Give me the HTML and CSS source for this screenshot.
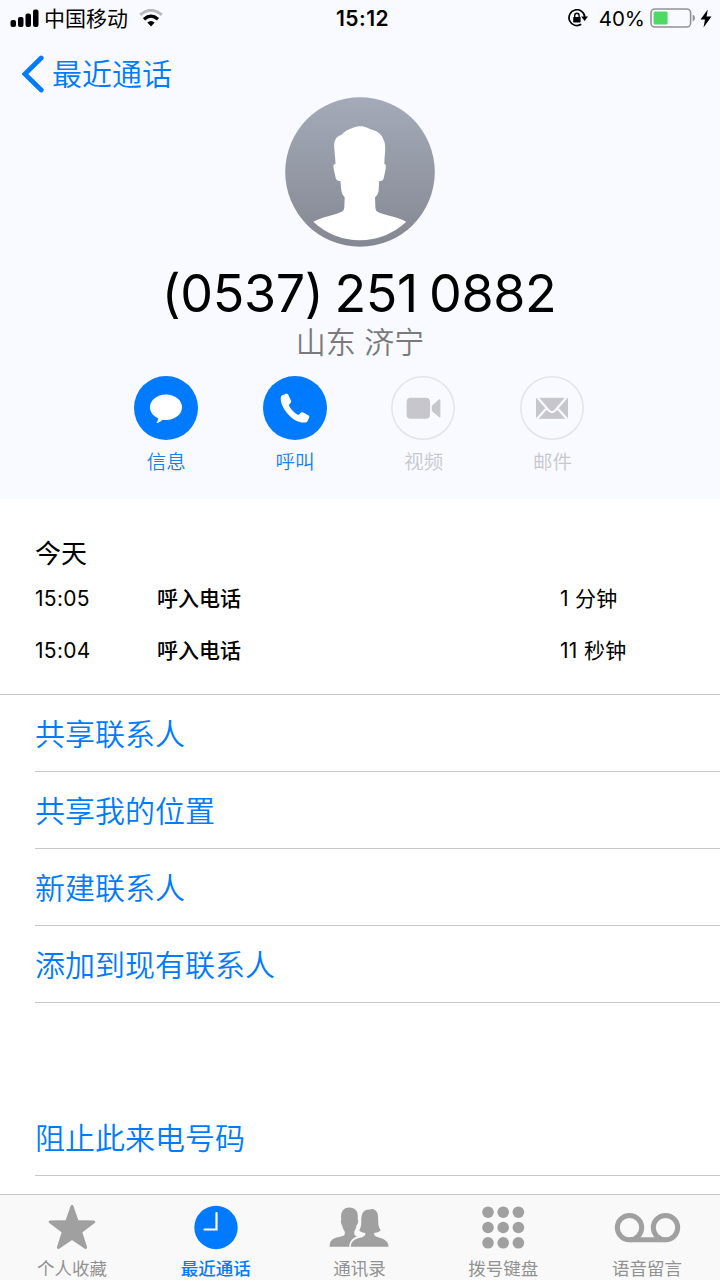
FILE: index.html
```html
<!DOCTYPE html>
<html lang="zh-CN">
<head>
    <meta charset="UTF-8">
    <meta name="viewport" content="width=device-width, initial-scale=1.0">
    <title>最近通话</title>
    <link rel="stylesheet" href="styles.css">
</head>
<body>
<div class="phone">
    <header class="header">
        <div class="status">
            <div class="status-left">
                <svg class="signal" width="29" height="18" viewBox="0 0 29 18">
                    <rect x="0.5" y="11" width="5.5" height="7" rx="2"/>
                    <rect x="8" y="8" width="5.5" height="10" rx="2"/>
                    <rect x="15.5" y="4.5" width="5.5" height="13.5" rx="2"/>
                    <rect x="23" y="0.5" width="5.5" height="17.5" rx="2"/>
                </svg>
                <span class="carrier">中国移动</span>
                <svg class="wifi" width="24" height="18" viewBox="0 0 24 18">
                    <path d="M1.2 5.9Q12-3.3 22.8 5.9" fill="none" stroke="#b8b8bc" stroke-width="3"/>
                    <path d="M5 10.2Q12 4.2 19 10.2" fill="none" stroke="#000" stroke-width="3.2"/>
                    <path d="M8.3 13.6Q12 10.6 15.7 13.6L12 17.6z"/>
                </svg>
            </div>
            <span class="clock">15:12</span>
            <div class="status-right">
                <svg class="lock" width="20" height="18" viewBox="0 0 20 18">
                    <path d="M13.2 15.3A7.9 7.9 0 1 1 16.8 8.2" fill="none" stroke="#000" stroke-width="1.7"/>
                    <path d="M13.2 7.5H20L16.6 12z"/>
                    <rect x="5.2" y="8" width="7.4" height="5.4" rx="0.6"/>
                    <path d="M6.7 8V6.4a2.2 2.2 0 0 1 4.4 0V8" fill="none" stroke="#000" stroke-width="1.4"/>
                </svg>
                <span class="percent">40%</span>
                <svg class="battery" width="46" height="20" viewBox="0 0 46 20">
                    <rect x="1" y="1" width="39.6" height="18" rx="4" fill="none" stroke="#919196" stroke-width="1.6"/>
                    <path d="M42.7 6.5c3 1.5 3 5.5 0 7z" fill="#919196"/>
                    <rect x="3.6" y="3.6" width="14" height="12.8" rx="1.5" fill="#4cd964"/>
                </svg>
                <svg class="bolt" width="12" height="19" viewBox="0 0 12 19">
                    <path d="M7.8 0.5L0.5 10.4H5L3.5 18.5L11.5 7.6H6.6z"/>
                </svg>
            </div>
        </div>

        <div class="nav">
            <svg width="22" height="38" viewBox="0 0 22 38">
                <path d="M19.2 3L2.8 19L19.2 35" fill="none" stroke="#007aff" stroke-width="4.8" stroke-linecap="round" stroke-linejoin="miter"/>
            </svg>
            <span>最近通话</span>
        </div>

        <svg class="avatar" width="150" height="150" viewBox="0 0 150 150">
            <defs>
                <linearGradient id="avatarBg" x1="0" y1="0" x2="0" y2="1">
                    <stop offset="0" stop-color="#a4aab9"/>
                    <stop offset="1" stop-color="#858892"/>
                </linearGradient>
            </defs>
            <circle cx="75" cy="75" r="74.8" fill="url(#avatarBg)"/>
            <path fill="#fff" d="M75 29.3C81 29.3 84 32 89 33.5C95 35 100.2 42 100.2 50C100.2 57 99.4 61 99.3 67C101 66.8 101 68.5 100.6 72L98.8 81C98.3 83.5 96.5 84 94.2 84L93.6 94C93.3 97 91.5 99 90 100.3L90.3 109C90.4 112.5 91 114 93 115C100 118.5 112 119.5 121.3 124.8A68 68 0 0 1 28.3 124.8C38 119.5 49 118.5 56 115C58.5 114 59.3 112.5 59.4 109L59.7 100.3C57.5 98 56.5 96 56.2 92L55.4 84C53 84.3 51.3 83.3 50.7 81L48.7 72C48 68.5 48.5 66.5 50.6 67L49.2 50C48.8 44 51 40.5 54 39C58 37.5 58.5 35 63 32.8C67.5 31 71 29.3 75 29.3z"/>
        </svg>
        <h1 class="number">(0537) 251 0882</h1>
        <div class="place">山东 济宁</div>

        <div class="actions">
            <div class="action">
                <svg width="64" height="64" viewBox="0 0 64 64">
                    <circle cx="32" cy="32" r="32" fill="#007aff"/>
                    <path fill="#fff" d="M32 18.6C41 18.6 48 24.2 48 31.3S41 44 32 44C30.8 44 29.6 43.9 28.5 43.7C26.8 45.7 24.7 46.9 22.2 47.1C23.4 45.8 24.1 44.3 24 42.3C19.2 40.2 16 36.1 16 31.3C16 24.2 23 18.6 32 18.6z"/>
                </svg>
                <span>信息</span>
            </div>
            <div class="action">
                <svg width="64" height="64" viewBox="0 0 64 64">
                    <circle cx="32" cy="32" r="32" fill="#007aff"/>
                    <path fill="#fff" d="M19.3 19.3L22.4 17.9C23.7 17.3 24.8 17.7 25.4 19L28 24.8C28.5 26 28 26.9 26.9 27.7C25.9 28.4 25.8 29.4 26.5 30.6C28.5 34 31 36.7 34.4 38.5C35.4 39 36.2 38.8 36.9 37.8C37.7 36.5 38.9 36 40.2 36.6L45.2 39.2C46.4 39.9 46.6 40.8 46 42.1L44.6 44.9C44.2 45.8 43.4 46.3 42.4 46.5C36.5 47.3 29.5 43.5 24.8 38C20 32.5 17.2 26 17.8 21.6C18 20.5 18.4 19.8 19.3 19.3z"/>
                </svg>
                <span>呼叫</span>
            </div>
            <div class="action disabled">
                <svg width="64" height="64" viewBox="0 0 64 64">
                    <circle cx="32" cy="32" r="31.2" fill="none" stroke="#e5e4eb" stroke-width="1.6"/>
                    <rect x="15.6" y="21.8" width="23.4" height="21" rx="4" fill="#c7c6cd"/>
                    <path d="M40.8 29.7L48.2 23.3Q49.4 22.8 49.4 24.2V40.4Q49.4 41.8 48.2 41.3L40.8 35.1z" fill="#c7c6cd"/>
                </svg>
                <span>视频</span>
            </div>
            <div class="action disabled">
                <svg width="64" height="64" viewBox="0 0 64 64">
                    <circle cx="32" cy="32" r="31.2" fill="none" stroke="#e5e4eb" stroke-width="1.6"/>
                    <rect x="16" y="21.8" width="32" height="21" fill="#c7c6cd"/>
                    <path d="M16 19.8L28.8 34.5Q32 37.8 35.2 34.5L48 19.8M16 44L26.6 32.2M48 44L37.4 32.2" fill="none" stroke="#f9faff" stroke-width="2.2"/>
                </svg>
                <span>邮件</span>
            </div>
        </div>
    </header>

    <section class="history">
        <h2>今天</h2>
        <div class="call">
            <span>15:05</span>
            <span class="kind">呼入电话</span>
            <span>1 分钟</span>
        </div>
        <div class="call">
            <span>15:04</span>
            <span class="kind">呼入电话</span>
            <span>11 秒钟</span>
        </div>
    </section>

    <ul class="links">
        <li>共享联系人</li>
        <li>共享我的位置</li>
        <li>新建联系人</li>
        <li>添加到现有联系人</li>
        <li class="block">阻止此来电号码</li>
    </ul>

    <nav class="tabs">
        <div class="tab">
            <svg width="60" height="48" viewBox="0 0 60 48">
                <path d="M30 4.5L35.2 19.4L51.8 19.9L38.6 29.8L43.6 45.4L30 36.3L16.4 45.4L21.4 29.8L8.2 19.9L24.8 19.4z" fill="#a0a0a0" stroke="#a0a0a0" stroke-width="3" stroke-linejoin="round"/>
            </svg>
            <span>个人收藏</span>
        </div>
        <div class="tab active">
            <svg width="60" height="48" viewBox="0 0 60 48">
                <circle cx="30" cy="25.5" r="21.7" fill="#007aff"/>
                <path d="M30.5 11V27.5H18.5" fill="none" stroke="#fff" stroke-width="2.2" stroke-linecap="round"/>
            </svg>
            <span>最近通话</span>
        </div>
        <div class="tab">
            <svg width="60" height="48" viewBox="0 0 60 48">
                <path fill="#a0a0a0" d="M20.5 5.4C26 5.4 29 9 28.8 14.5L28.7 17.5C29.8 18.5 29 22 27.5 23.5C27 26.5 26 28.5 25.3 29.5V32C25.6 34.3 28.5 34 28.5 34C24 36 20.5 38.5 20.3 44.8H0.6C0.6 38 4.5 36 9 35.2C13 34.4 15.4 33.8 15.8 32V29.5C14.5 28 13.6 26 13.3 23.8C11.9 22 11.3 18.5 12.3 17.5C11 10 14.5 5.4 20.5 5.4z"/>
                <path fill="#a0a0a0" d="M40.8 7.4C42.5 6.5 44.5 6.8 46 8C49.2 10.2 49.2 14 49.2 19C49.2 23.5 50 25.5 51.7 28.6C49.8 30.2 47.5 30.8 45 31C45 33.7 46.5 34.5 50.5 35.7C56 37.2 59.4 39.5 59.5 44.8H21.8C22 39.5 25.5 37.2 31 35.8C35 34.7 36.4 33.8 36.4 31C34 30.8 31.8 30.2 30.2 28.6C32.2 25 32.3 22 32.3 18C32.3 11.5 34.5 7 40.8 7.4z"/>
            </svg>
            <span>通讯录</span>
        </div>
        <div class="tab">
            <svg width="60" height="48" viewBox="0 0 60 48" fill="#a0a0a0">
                <circle cx="15" cy="10.2" r="5.8"/><circle cx="30.2" cy="10.2" r="5.8"/><circle cx="45.4" cy="10.2" r="5.8"/>
                <circle cx="15" cy="25.5" r="5.8"/><circle cx="30.2" cy="25.5" r="5.8"/><circle cx="45.4" cy="25.5" r="5.8"/>
                <circle cx="15" cy="40.8" r="5.8"/><circle cx="30.2" cy="40.8" r="5.8"/><circle cx="45.4" cy="40.8" r="5.8"/>
            </svg>
            <span>拨号键盘</span>
        </div>
        <div class="tab">
            <svg width="68" height="48" viewBox="0 0 68 48">
                <g fill="none" stroke="#a0a0a0" stroke-width="5">
                    <circle cx="16.5" cy="25.6" r="12.2"/>
                    <circle cx="52.5" cy="25.6" r="12.2"/>
                    <path d="M16.5 37.8H52.5"/>
                </g>
            </svg>
            <span>语音留言</span>
        </div>
    </nav>
</div>
</body>
</html>
```
FILE: styles.css
```css
* {
    box-sizing: border-box;
}
body {
    margin: 0;
    font-family: Inter, "Noto Sans CJK SC", sans-serif;
    color: #000;
}
svg {
    display: block;
    flex-shrink: 0;
}
h1, h2, ul {
    margin: 0;
    padding: 0;
    font-weight: 400;
}
.phone {
    width: 720px;
    height: 1280px;
    display: flex;
    flex-direction: column;
    background: #fff;
    overflow: hidden;
}

/* 顶部 */
.header {
    height: 499px;
    flex-shrink: 0;
    background: #f9faff;
    display: flex;
    flex-direction: column;
    align-items: center;
}
.status {
    width: 100%;
    height: 36px;
    padding: 0 8px 0 10px;
    display: grid;
    grid-template-columns: 1fr auto 1fr;
    align-items: center;
    font-size: 21px;
    line-height: 34px;
}
.status-left,
.status-right {
    display: flex;
    align-items: center;
}
.status-right {
    justify-content: flex-end;
}
.carrier {
    margin: 0 11px 0 5px;
    padding-top: 1px;
}
.clock {
    padding: 2px 0 0 3px;
    font-weight: 600;
    font-size: 21px;
    letter-spacing: 0.5px;
}
.percent {
    margin: 0 5px 0 11px;
    padding-top: 2px;
    font-size: 20.5px;
}
.bolt {
    margin-left: 4px;
}
.nav {
    width: 100%;
    height: 61px;
    padding: 19px 0 0 22px;
    display: flex;
    gap: 8px;
    align-items: flex-start;
    color: #007aff;
    font-size: 30px;
    font-weight: 350;
    line-height: 38px;
}
.number {
    height: 60px;
    margin: 16px 2px 0 0;
    font-size: 52px;
    line-height: 62px;
    letter-spacing: -0.4px;
    word-spacing: -3px;
    white-space: nowrap;
}
.place {
    height: 36px;
    font-size: 30px;
    font-weight: 350;
    line-height: 38px;
    color: #7a7a7d;
}
.actions {
    width: 515px;
    margin: 17px 2px 0 0;
    display: grid;
    grid-template-columns: repeat(4, 1fr);
}
.action {
    display: flex;
    flex-direction: column;
    align-items: center;
    gap: 8px;
    color: #1a7fe8;
    font-size: 19.5px;
    font-weight: 350;
    line-height: 28px;
}
.action span {
    padding-left: 1px;
}
.action.disabled {
    color: #c7c6cd;
}

/* 通话记录 */
.history {
    height: 196px;
    flex-shrink: 0;
    padding: 36px 0 0 35px;
    border-bottom: 1px solid #c8c7cc;
}
.history h2 {
    font-size: 26px;
    line-height: 38px;
}
.call {
    height: 52px;
    display: grid;
    grid-template-columns: 122px 403px 1fr;
    align-items: center;
    font-size: 21px;
    line-height: 30px;
    letter-spacing: 0.3px;
}
.kind {
    font-weight: 500;
    letter-spacing: 0;
}

.links {
    flex: 1;
    padding-left: 35px;
    list-style: none;
}
.links li {
    height: 77px;
    border-bottom: 1px solid #c8c7cc;
    color: #007aff;
    font-size: 30px;
    font-weight: 350;
    line-height: 79px;
}
.links .block {
    margin-top: 96px;
}

/* 底部标签栏 */
.tabs {
    height: 86px;
    flex-shrink: 0;
    padding: 7px 1px 0 0;
    display: grid;
    grid-template-columns: repeat(5, 1fr);
    background: #f9f9f9;
    border-top: 1px solid #c8c8c8;
}
.tab {
    display: flex;
    flex-direction: column;
    align-items: center;
    color: #929292;
    font-size: 17.5px;
    line-height: 37px;
}
.tab.active {
    color: #007aff;
    font-weight: 500;
}
```
